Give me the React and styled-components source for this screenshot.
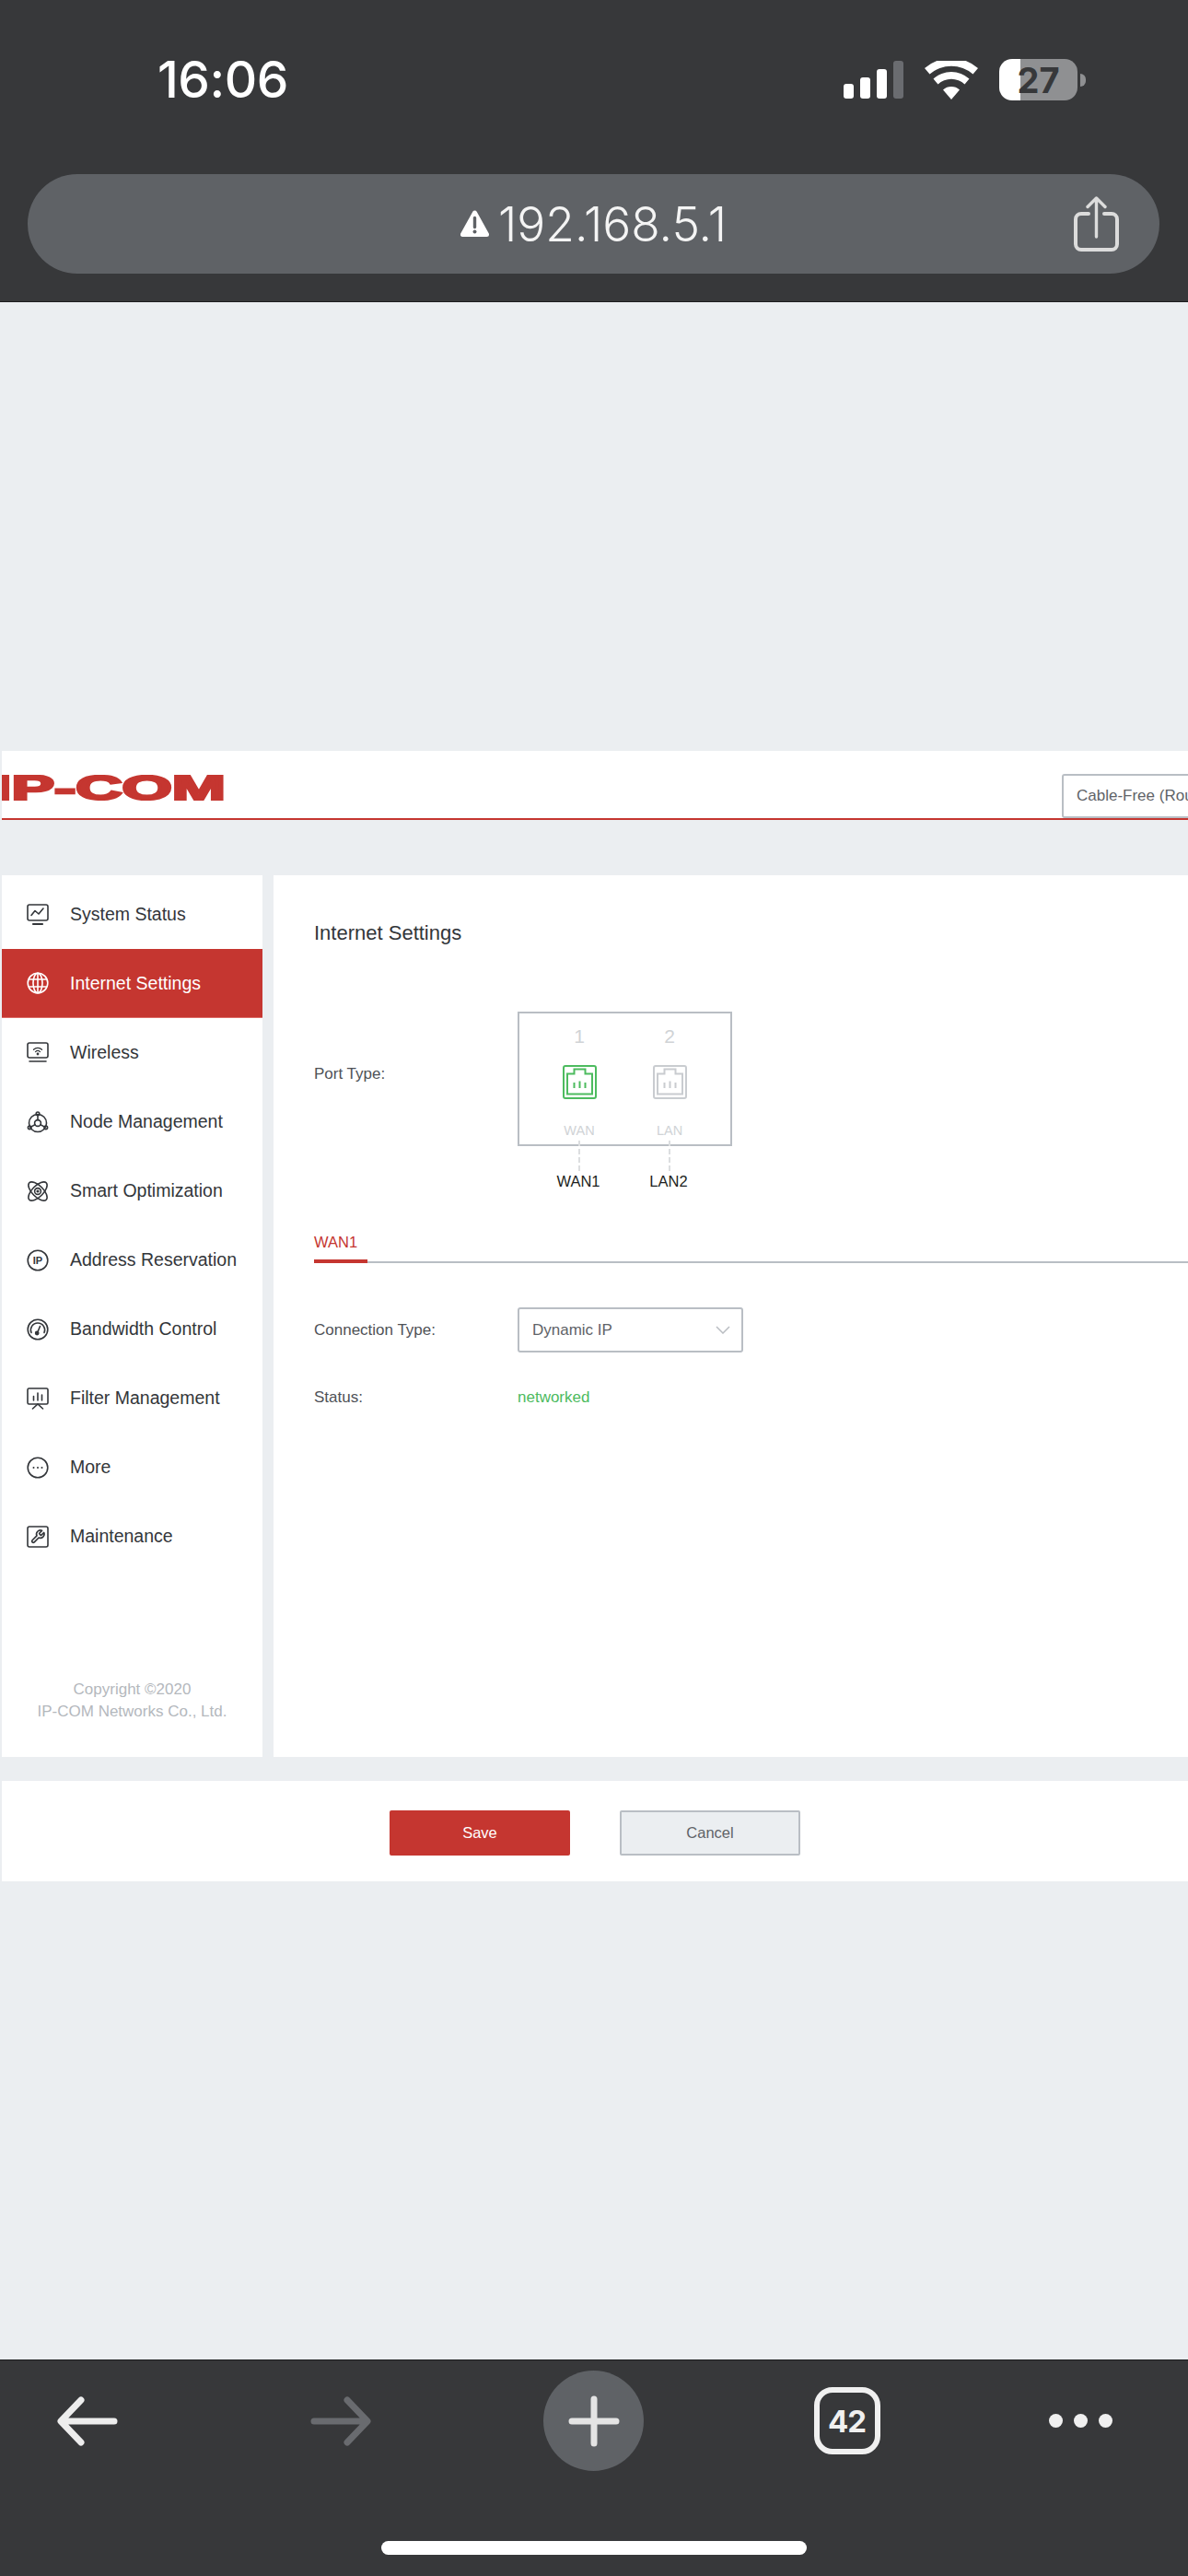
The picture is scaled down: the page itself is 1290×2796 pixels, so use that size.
import styled, { createGlobalStyle } from "styled-components";

const GlobalStyle = createGlobalStyle`
    html, body {
        margin: 0;
        padding: 0;
        background: #ebeef1;
    }
    * {
        box-sizing: border-box;
    }
`;

const RED = "#c53630";

const Pantalla = styled.div`
    width: 1290px;
    height: 2796px;
    display: flex;
    flex-direction: column;
    overflow: hidden;
    font-family: "Liberation Sans", Arial, sans-serif;
    background: #ebeef1;
`;

/* browser chrome, top */
const BarraSuperior = styled.header`
    height: 328px;
    flex-shrink: 0;
    padding-top: 64px;
    background: #37383a;
    border-bottom: 1px solid #1c1c1e;
`;
const FilaEstado = styled.div`
    height: 45px;
    display: flex;
    align-items: center;
    justify-content: space-between;
    padding: 0 111px 0 171px;
`;
const Hora = styled.span`
    font-family: Inter, "Liberation Sans", sans-serif;
    font-size: 55px;
    font-weight: 500;
    letter-spacing: -0.5px;
    line-height: 45px;
    color: #fff;
`;
const IconosEstado = styled.div`
    display: flex;
    align-items: center;
    gap: 23px;
`;
const Senal = styled.div`
    display: flex;
    align-items: flex-end;
    gap: 7px;
    height: 41px;
`;
const BarraSenal = styled.span`
    width: 11px;
    height: ${props => props.alto}px;
    border-radius: 3px;
    background: ${props => props.apagada ? "#6a6c70" : "#fff"};
`;
const Bateria = styled.div`
    width: 94px;
    height: 45px;
    display: flex;
    align-items: center;
    gap: 3px;
`;
const CuerpoBateria = styled.div`
    width: 85px;
    height: 45px;
    border-radius: 14px;
    display: flex;
    align-items: center;
    justify-content: center;
    font-family: Inter, "Liberation Sans", sans-serif;
    font-size: 38px;
    font-weight: 700;
    color: #37383a;
    background: linear-gradient(90deg, #fff 27%, #8f9092 27%);
`;
const PuntaBateria = styled.span`
    width: 6px;
    height: 14px;
    border-radius: 0 7px 7px 0;
    background: #8f9092;
`;
const BarraUrl = styled.div`
    height: 108px;
    margin: 80px 31px 0 30px;
    border-radius: 54px;
    background: #5f6266;
    display: grid;
    grid-template-columns: 1fr auto 1fr;
    align-items: center;
`;
const Direccion = styled.div`
    grid-column: 2;
    display: flex;
    align-items: center;
    gap: 10px;
    font-family: Inter, "Liberation Sans", sans-serif;
    font-size: 51.5px;
    font-weight: 300;
    line-height: 60px;
    color: #f4f4f4;
`;
const BotonCompartir = styled.div`
    justify-self: end;
    margin-right: 44px;
    display: flex;
`;

/* router page */
const Pagina = styled.main`
    flex: 1;
    padding: 487px 0 0 2px;
`;
const Cabecera = styled.div`
    height: 75px;
    display: flex;
    align-items: flex-start;
    background: #fff;
    border-bottom: 2px solid ${RED};
`;
const Logo = styled.svg`
    margin-top: 26px;
    flex-shrink: 0;
`;
const SelectorModo = styled.div`
    width: 300px;
    height: 48px;
    margin: 25px 0 0 907px;
    padding-left: 14px;
    flex-shrink: 0;
    border: 2px solid #b9bec4;
    border-radius: 3px;
    background: #fff;
    font-size: 17px;
    line-height: 44px;
    color: #5f6368;
`;
const Cuerpo = styled.div`
    height: 957px;
    margin-top: 60px;
    display: flex;
    gap: 12px;
`;
const Lateral = styled.nav`
    width: 283px;
    flex-shrink: 0;
    display: flex;
    flex-direction: column;
    padding-top: 5px;
    background: #fff;
`;
const ItemMenu = styled.div`
    height: 75px;
    padding-left: 27px;
    display: flex;
    align-items: center;
    gap: 23px;
    font-size: 19.5px;
    color: ${props => props.activo ? "#fff" : "#33363a"};
    background: ${props => props.activo ? RED : "transparent"};
    border-bottom: ${props => props.activo ? "1px solid #dc6a65" : "none"};
`;
const IconoMenu = styled.svg`
    width: 24px;
    height: 24px;
    flex-shrink: 0;
    fill: none;
    stroke: currentColor;
    stroke-width: 1.6;
    stroke-linecap: round;
    stroke-linejoin: round;
`;
const Copyright = styled.div`
    margin-top: auto;
    padding-bottom: 37px;
    text-align: center;
    font-size: 17px;
    line-height: 24px;
    color: #b4b8bd;
`;
const Panel = styled.section`
    flex: 1;
    padding: 44px 0 0 44px;
    background: #fff;
`;
const Titulo = styled.h2`
    margin: 0;
    font-size: 22px;
    font-weight: normal;
    line-height: 38px;
    color: #33363a;
`;
const FilaForm = styled.div`
    display: flex;
    align-items: ${props => props.alineado};
    margin-top: ${props => props.separacion}px;
`;
const Etiqueta = styled.label`
    width: 221px;
    flex-shrink: 0;
    font-size: 17px;
    line-height: 24px;
    color: #4f5257;
    padding-top: ${props => props.bajada || 0}px;
`;
const Diagrama = styled.div`
    width: 233px;
`;
const CajaPuertos = styled.div`
    height: 146px;
    padding: 13px 0 0 16px;
    display: flex;
    border: 2px solid #b9bec4;
`;
const Puerto = styled.div`
    width: 98px;
    display: flex;
    flex-direction: column;
    align-items: center;
`;
const NumeroPuerto = styled.span`
    font-size: 21px;
    line-height: 24px;
    color: #d0d3d6;
`;
const IconoPuerto = styled.svg`
    margin-top: 19px;
    fill: none;
    stroke: ${props => props.color};
    stroke-width: 2;
`;
const TipoPuerto = styled.span`
    margin-top: 24px;
    font-size: 14.5px;
    line-height: 20px;
    color: #d0d3d6;
`;
const Enlaces = styled.div`
    display: flex;
    margin-top: -6px;
    padding-left: 17px;
`;
const Enlace = styled.div`
    width: 98px;
    display: flex;
    flex-direction: column;
    align-items: center;
    font-size: 16.5px;
    line-height: 22px;
    color: #1d1f22;
`;
const Guion = styled.span`
    height: 33px;
    margin-left: 2px;
    border-left: 2px dashed #dcdee0;
`;
const Pestanas = styled.div`
    margin-top: 43px;
    border-bottom: 2px solid #b9bec4;
`;
const Pestana = styled.div`
    width: 58px;
    margin-bottom: -2px;
    padding-bottom: 7px;
    border-bottom: 4px solid ${RED};
    font-size: 16.5px;
    line-height: 24px;
    color: ${RED};
`;
const Desplegable = styled.div`
    width: 245px;
    height: 49px;
    padding: 0 12px 0 14px;
    display: flex;
    align-items: center;
    justify-content: space-between;
    border: 2px solid #b9bec4;
    border-radius: 3px;
    font-size: 17px;
    color: #5f6368;
`;
const Estado = styled.span`
    font-size: 17px;
    line-height: 24px;
    color: #4dbb5f;
`;
const Pie = styled.div`
    height: 109px;
    margin-top: 26px;
    padding: 4px 0 0 421px;
    display: flex;
    align-items: center;
    gap: 54px;
    background: #fff;
`;
const Boton = styled.button`
    width: 196px;
    height: 49px;
    padding: 0;
    border-radius: 2px;
    font-family: inherit;
    font-size: 16.5px;
    color: ${props => props.primario ? "#fff" : "#5f6368"};
    background: ${props => props.primario ? RED : "#ebeef1"};
    border: 2px solid ${props => props.primario ? RED : "#b9bec4"};
`;

/* browser chrome, bottom */
const BarraInferior = styled.footer`
    height: 235px;
    flex-shrink: 0;
    padding-top: 11px;
    background: #37383a;
    border-top: 1px solid #1c1c1e;
`;
const Herramientas = styled.div`
    height: 109px;
    margin-left: -43px;
    display: grid;
    grid-template-columns: repeat(4, 275px) 232px;
    align-items: center;
    justify-items: center;
`;
const BotonNuevo = styled.div`
    width: 109px;
    height: 109px;
    border-radius: 50%;
    background: #5f6266;
    display: flex;
    align-items: center;
    justify-content: center;
`;
const BotonPestanas = styled.div`
    width: 72px;
    height: 73px;
    border: 6px solid #f0f0f0;
    border-radius: 20px;
    display: flex;
    align-items: center;
    justify-content: center;
    font-family: Inter, "Liberation Sans", sans-serif;
    font-size: 33px;
    font-weight: 700;
    letter-spacing: -1px;
    color: #f0f0f0;
`;
const Puntos = styled.div`
    display: flex;
    gap: 12px;
`;
const Punto = styled.span`
    width: 15px;
    height: 15px;
    border-radius: 50%;
    background: #f0f0f0;
`;
const IndicadorInicio = styled.div`
    width: 462px;
    height: 15px;
    margin: 76px 0 0 414px;
    border-radius: 8px;
    background: #fff;
`;

const ICONOS = {
    sistema: (
        <>
            <rect x="1" y="1" width="22" height="17" rx="2" />
            <path d="M5 12.5 9 7.5l4 3.5 5-6" />
            <path d="M7 22h10" strokeWidth="2.2" />
        </>
    ),
    internet: (
        <>
            <circle cx="12" cy="12" r="10.8" />
            <ellipse cx="12" cy="12" rx="5" ry="10.8" />
            <path d="M12 1.2v21.6M2.4 8h19.2M2.4 16h19.2" />
        </>
    ),
    wireless: (
        <>
            <rect x="1" y="1" width="22" height="16" rx="2" />
            <path d="M7.5 8.2a6.5 6.5 0 0 1 9 0M9.5 10.6a3.6 3.6 0 0 1 5 0" strokeWidth="1.3" />
            <circle cx="12" cy="13" r=".6" />
            <path d="M3 21h18" strokeDasharray="1 .6" />
        </>
    ),
    nodo: (
        <>
            <circle cx="12" cy="13" r="9.5" />
            <circle cx="12" cy="13" r="3.4" />
            <circle cx="12" cy="2.8" r="1.8" />
            <circle cx="3.2" cy="17.8" r="1.8" />
            <circle cx="20.8" cy="17.8" r="1.8" />
            <path d="M12 4.6v5M5 16.9l4-2.2M19 16.9l-4-2.2" />
        </>
    ),
    optimizacion: (
        <>
            <ellipse cx="12" cy="12" rx="6" ry="13" transform="rotate(45 12 12)" />
            <ellipse cx="12" cy="12" rx="6" ry="13" transform="rotate(-45 12 12)" />
            <circle cx="12" cy="12" r="3.4" />
            <circle cx="12" cy="12" r=".8" />
        </>
    ),
    ip: (
        <>
            <circle cx="12" cy="12" r="10.8" />
            <text x="12" y="16" textAnchor="middle" fontFamily="Liberation Sans, sans-serif" fontSize="11" fontWeight="bold" fill="currentColor" stroke="none">IP</text>
        </>
    ),
    banda: (
        <>
            <circle cx="12" cy="12" r="10.8" />
            <path d="M5 15.5a7.6 7.6 0 1 1 14 0" />
            <path d="M14.5 8.5 11.8 15" />
            <circle cx="11.2" cy="16" r="1.6" fill="currentColor" />
        </>
    ),
    filtro: (
        <>
            <rect x="1" y="1" width="22" height="17" rx="1.5" />
            <path d="M7.5 9.5v4.5M12 6v8M16.5 8v6" />
            <path d="M12 18l-5.5 5M12 18l5.5 5" />
        </>
    ),
    mas: (
        <>
            <circle cx="12" cy="12" r="10.8" />
            <path d="M7.5 12h.01M12 12h.01M16.5 12h.01" strokeWidth="2" />
        </>
    ),
    mantenimiento: (
        <>
            <rect x="1" y="1" width="22" height="22" rx="2" />
            <path transform="translate(3.6 3.6) scale(.7)" d="M14.7 6.3a1 1 0 0 0 0 1.4l1.6 1.6a1 1 0 0 0 1.4 0l3.77-3.77a6 6 0 0 1-7.94 7.94l-6.91 6.91a2.12 2.12 0 0 1-3-3l6.91-6.91a6 6 0 0 1 7.94-7.94l-3.76 3.76z" strokeWidth="2.4" />
        </>
    ),
};

const MENU = [
    { id: "sistema", texto: "System Status" },
    { id: "internet", texto: "Internet Settings", activo: true },
    { id: "wireless", texto: "Wireless" },
    { id: "nodo", texto: "Node Management" },
    { id: "optimizacion", texto: "Smart Optimization" },
    { id: "ip", texto: "Address Reservation" },
    { id: "banda", texto: "Bandwidth Control" },
    { id: "filtro", texto: "Filter Management" },
    { id: "mas", texto: "More" },
    { id: "mantenimiento", texto: "Maintenance" },
];

const PUERTOS = [
    { numero: 1, tipo: "WAN", nombre: "WAN1", color: "#4dbb5f" },
    { numero: 2, tipo: "LAN", nombre: "LAN2", color: "#c9ccd0" },
];

const SenalWifi = () => (
    <svg width="58" height="42" viewBox="0 0 58 42" fill="#fff">
        <path d="M29 42 20 31.5a13.5 13.5 0 0 1 18 0z" />
        <path d="M14.5 25.5 9.5 19.5a29 29 0 0 1 39 0l-5 6a21 21 0 0 0-29 0z" />
        <path d="M5.5 14.5 0 8a44 44 0 0 1 58 0l-5.5 6.5a36 36 0 0 0-47 0z" />
    </svg>
);

const Aviso = () => (
    <svg width="31" height="30" viewBox="0 0 31 30">
        <path d="M15.5 3 2.5 26.5h26z" fill="#fff" stroke="#fff" strokeWidth="5" strokeLinejoin="round" />
        <path d="M15.5 8.5v10" stroke="#5f6266" strokeWidth="3.4" strokeLinecap="round" />
        <circle cx="15.5" cy="23.5" r="2" fill="#5f6266" />
    </svg>
);

const Compartir = () => (
    <svg width="49" height="60" viewBox="0 0 49 60" fill="none" stroke="#dcdcdc" strokeLinecap="round" strokeLinejoin="round">
        <path d="M16 19H8a6 6 0 0 0-6 6v27a6 6 0 0 0 6 6h33a6 6 0 0 0 6-6V25a6 6 0 0 0-6-6h-8" strokeWidth="4" />
        <path d="M24.5 44V3M15 11.5 24.5 2 34 11.5" strokeWidth="3.4" />
    </svg>
);

const Flecha = ({ color, invertida }) => (
    <svg width="66" height="54" viewBox="0 0 66 54" fill="none" stroke={color} strokeWidth="7" strokeLinecap="round" strokeLinejoin="round" style={invertida ? { transform: "scaleX(-1)" } : undefined}>
        <path d="M62 27H5M26 4 4 27l22 23" />
    </svg>
);

const Mas = () => (
    <svg width="56" height="56" viewBox="0 0 56 56" stroke="#e4e4e4" strokeWidth="7" strokeLinecap="round">
        <path d="M28 4v48M4 28h48" />
    </svg>
);

const Flechita = () => (
    <svg width="16" height="9" viewBox="0 0 16 9" fill="none" stroke="#b9bdc2" strokeWidth="1.5">
        <path d="M1 1l7 7 7-7" />
    </svg>
);

export default function App() {
    return (
        <Pantalla>
            <GlobalStyle />
            <BarraSuperior>
                <FilaEstado>
                    <Hora>16:06</Hora>
                    <IconosEstado>
                        <Senal>
                            <BarraSenal alto={16} />
                            <BarraSenal alto={23} />
                            <BarraSenal alto={32} />
                            <BarraSenal alto={41} apagada />
                        </Senal>
                        <SenalWifi />
                        <Bateria>
                            <CuerpoBateria>27</CuerpoBateria>
                            <PuntaBateria />
                        </Bateria>
                    </IconosEstado>
                </FilaEstado>
                <BarraUrl>
                    <Direccion>
                        <Aviso />
                        192.168.5.1
                    </Direccion>
                    <BotonCompartir>
                        <Compartir />
                    </BotonCompartir>
                </BarraUrl>
            </BarraSuperior>

            <Pagina>
                <Cabecera>
                    <Logo width="244" height="28" viewBox="0 0 244 28">
                        <text
                            x="-9"
                            y="26.6"
                            textLength="252"
                            lengthAdjust="spacingAndGlyphs"
                            fontFamily="Liberation Sans, sans-serif"
                            fontWeight="bold"
                            fontSize="36"
                            fill={RED}
                            stroke={RED}
                            strokeWidth="2.4"
                        >
                            IP-COM
                        </text>
                    </Logo>
                    <SelectorModo>Cable-Free (Router)</SelectorModo>
                </Cabecera>

                <Cuerpo>
                    <Lateral>
                        {MENU.map(item => (
                            <ItemMenu key={item.id} activo={item.activo}>
                                <IconoMenu viewBox="0 0 24 24">{ICONOS[item.id]}</IconoMenu>
                                {item.texto}
                            </ItemMenu>
                        ))}
                        <Copyright>
                            Copyright ©2020
                            <br />
                            IP-COM Networks Co., Ltd.
                        </Copyright>
                    </Lateral>

                    <Panel>
                        <Titulo>Internet Settings</Titulo>

                        <FilaForm alineado="flex-start" separacion={66}>
                            <Etiqueta bajada={56}>Port Type:</Etiqueta>
                            <Diagrama>
                                <CajaPuertos>
                                    {PUERTOS.map(p => (
                                        <Puerto key={p.numero}>
                                            <NumeroPuerto>{p.numero}</NumeroPuerto>
                                            <IconoPuerto width="37" height="37" viewBox="0 0 37 37" color={p.color}>
                                                <rect x="1" y="1" width="35" height="35" rx="2" />
                                                <path d="M5 9.5h7.5v-5h12v5H32v22H5z" />
                                                <path d="M12.5 19v6M18.5 17.5V25M24.5 19v6" />
                                            </IconoPuerto>
                                            <TipoPuerto>{p.tipo}</TipoPuerto>
                                        </Puerto>
                                    ))}
                                </CajaPuertos>
                                <Enlaces>
                                    {PUERTOS.map(p => (
                                        <Enlace key={p.nombre}>
                                            <Guion />
                                            {p.nombre}
                                        </Enlace>
                                    ))}
                                </Enlaces>
                            </Diagrama>
                        </FilaForm>

                        <Pestanas>
                            <Pestana>WAN1</Pestana>
                        </Pestanas>

                        <FilaForm alineado="center" separacion={48}>
                            <Etiqueta>Connection Type:</Etiqueta>
                            <Desplegable>
                                Dynamic IP
                                <Flechita />
                            </Desplegable>
                        </FilaForm>

                        <FilaForm alineado="center" separacion={37}>
                            <Etiqueta>Status:</Etiqueta>
                            <Estado>networked</Estado>
                        </FilaForm>
                    </Panel>
                </Cuerpo>

                <Pie>
                    <Boton primario>Save</Boton>
                    <Boton>Cancel</Boton>
                </Pie>
            </Pagina>

            <BarraInferior>
                <Herramientas>
                    <Flecha color="#ededed" />
                    <Flecha color="#696b6f" invertida />
                    <BotonNuevo>
                        <Mas />
                    </BotonNuevo>
                    <BotonPestanas>42</BotonPestanas>
                    <Puntos>
                        <Punto />
                        <Punto />
                        <Punto />
                    </Puntos>
                </Herramientas>
                <IndicadorInicio />
            </BarraInferior>
        </Pantalla>
    );
}
